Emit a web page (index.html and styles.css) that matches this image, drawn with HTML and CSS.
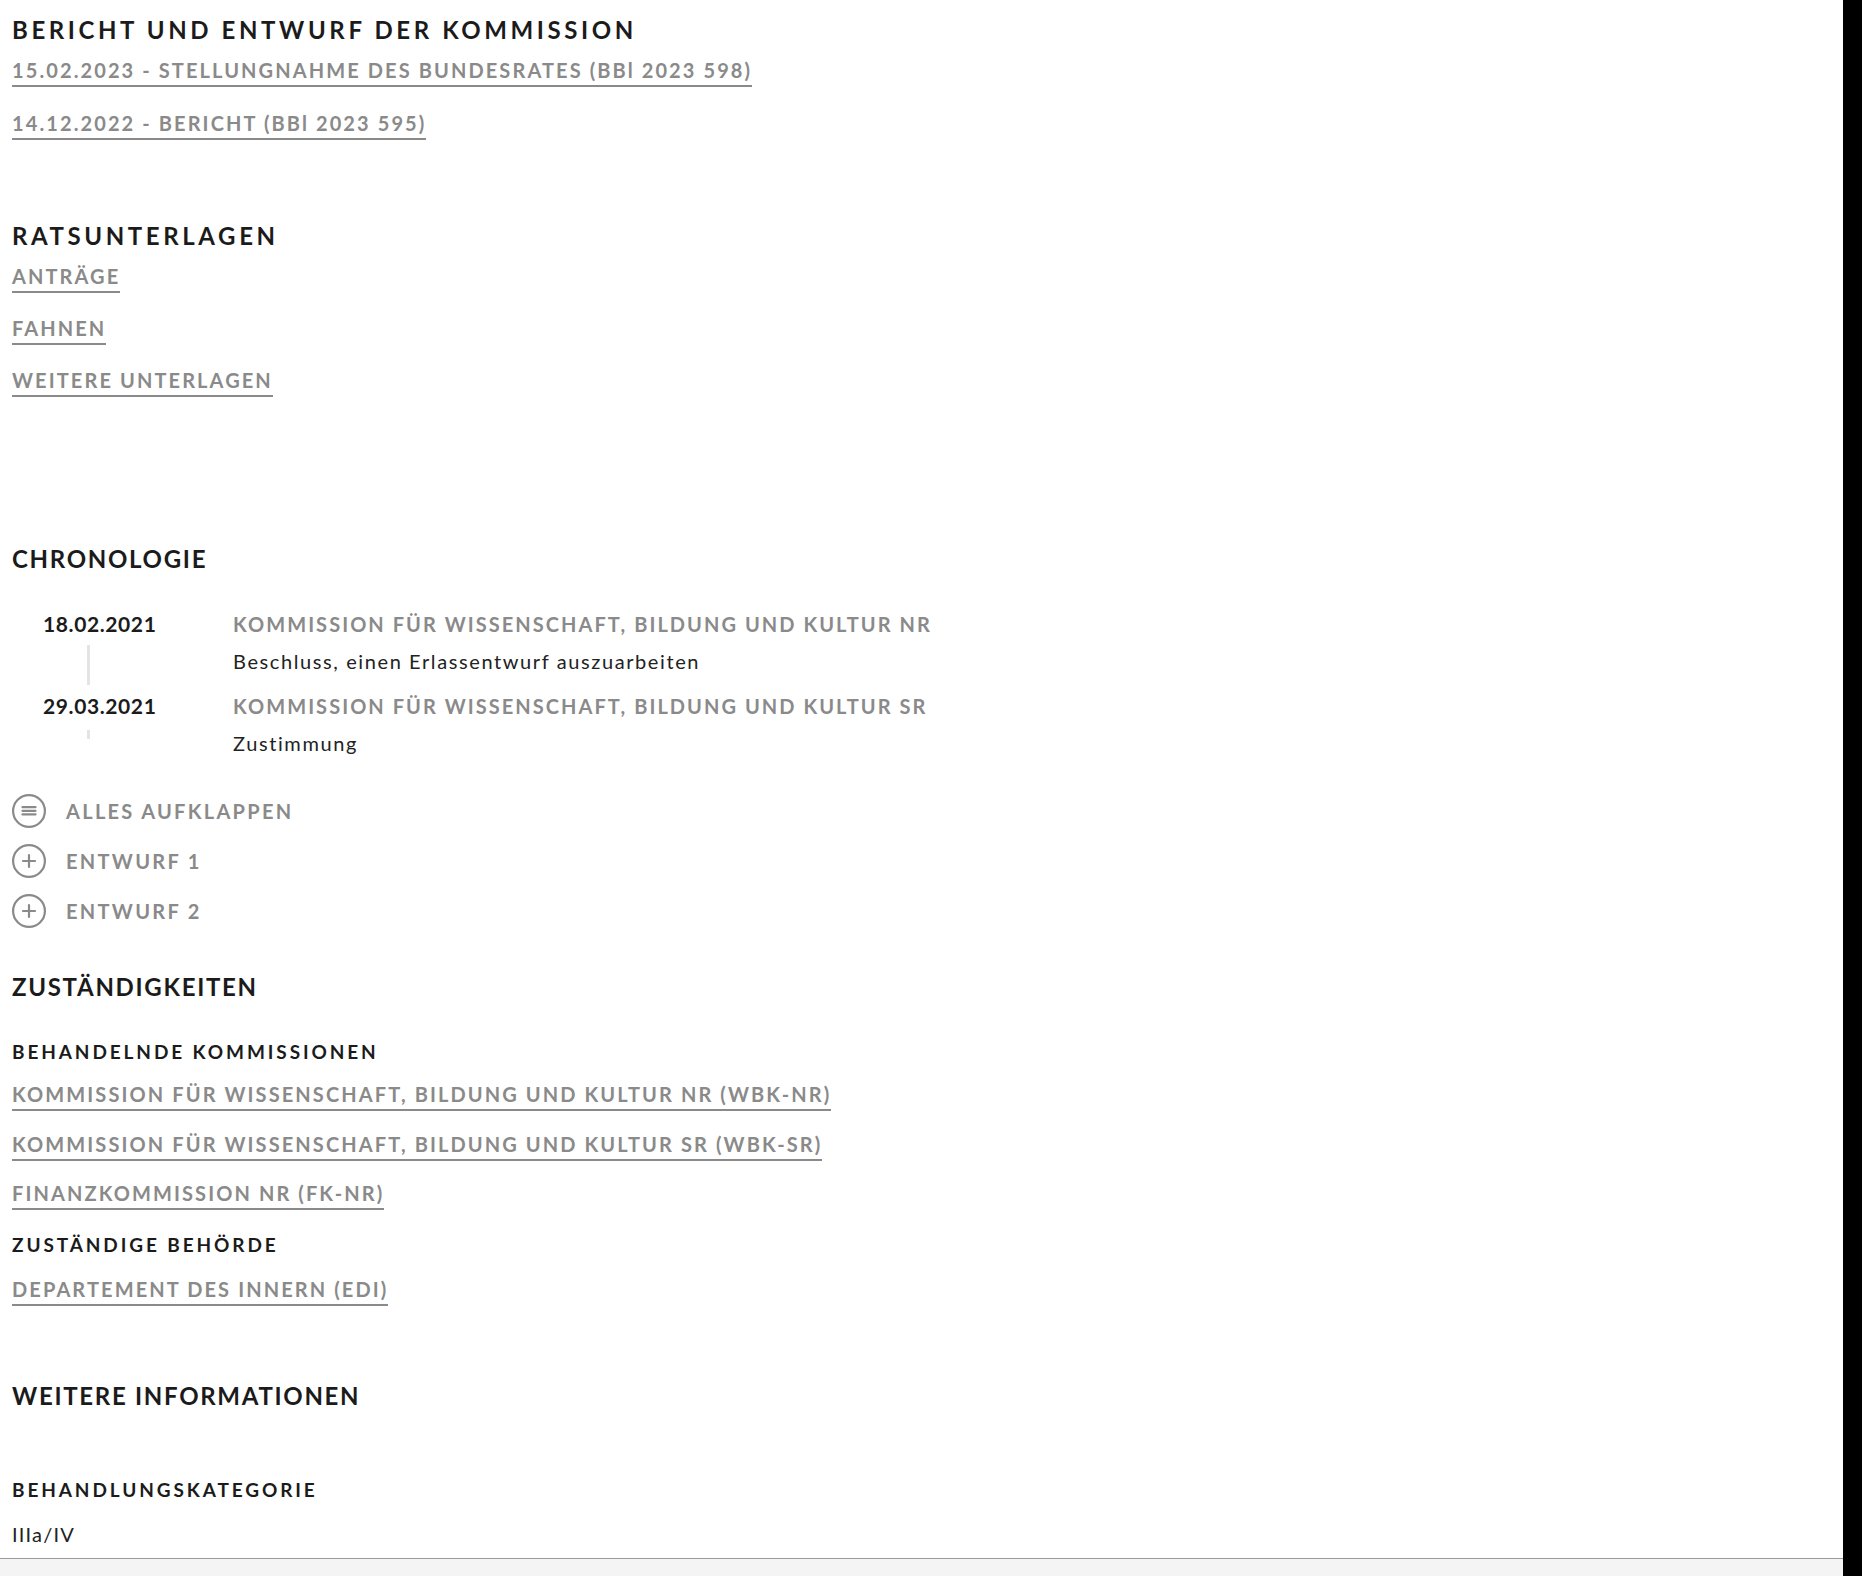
FILE: index.html
```html
<!DOCTYPE html>
<html lang="de">

    <head>
        <meta charset="UTF-8">
        <meta name="viewport" content="width=device-width, initial-scale=1.0">
        <title>Geschäft</title>
        <link rel="stylesheet" href="styles.css">
    </head>

    <body>
        <div class="page">
            <div class="main">
                <div class="content">
                    <h2 class="heading heading-wide">Bericht und Entwurf der Kommission</h2>
                    <ul class="links links-first">
                        <li><a href="#" class="doc-link">15.02.2023 - Stellungnahme des Bundesrates (BB<span class="keep-case">l</span> 2023 598)</a></li>
                        <li><a href="#" class="doc-link">14.12.2022 - Bericht (BB<span class="keep-case">l</span> 2023 595)</a></li>
                    </ul>

                    <h2 class="heading heading-wide heading-rats">Ratsunterlagen</h2>
                    <ul class="links links-rats">
                        <li><a href="#" class="doc-link">Anträge</a></li>
                        <li><a href="#" class="doc-link">Fahnen</a></li>
                        <li><a href="#" class="doc-link">Weitere Unterlagen</a></li>
                    </ul>

                    <h2 class="heading heading-chrono">Chronologie</h2>
                    <div class="timeline">
                        <div class="tl-entry">
                            <div class="tl-date-col">
                                <span class="tl-date">18.02.2021</span>
                                <span class="tl-line tl-line-long"></span>
                            </div>
                            <div class="tl-body">
                                <p class="tl-title">Kommission für Wissenschaft, Bildung und Kultur NR</p>
                                <p class="tl-text">Beschluss, einen Erlassentwurf auszuarbeiten</p>
                            </div>
                        </div>
                        <div class="tl-entry">
                            <div class="tl-date-col">
                                <span class="tl-date">29.03.2021</span>
                                <span class="tl-line tl-line-short"></span>
                            </div>
                            <div class="tl-body">
                                <p class="tl-title">Kommission für Wissenschaft, Bildung und Kultur SR</p>
                                <p class="tl-text">Zustimmung</p>
                            </div>
                        </div>
                    </div>

                    <div class="toggles">
                        <div class="toggle">
                            <svg class="toggle-icon" viewBox="0 0 34 34" width="34" height="34">
                                <circle cx="17" cy="17" r="15.9" fill="none" stroke="#8a8a8a" stroke-width="2.2"/>
                                <path d="M10.5 13.2h13M10.5 16.8h13M10.5 20.4h13" stroke="#8a8a8a" stroke-width="2.2" stroke-linecap="round"/>
                            </svg>
                            <span>Alles aufklappen</span>
                        </div>
                        <div class="toggle">
                            <svg class="toggle-icon" viewBox="0 0 34 34" width="34" height="34">
                                <circle cx="17" cy="17" r="15.9" fill="none" stroke="#8a8a8a" stroke-width="2.2"/>
                                <path d="M11 17h12M17 11v12" stroke="#8a8a8a" stroke-width="2.2" stroke-linecap="round"/>
                            </svg>
                            <span>Entwurf 1</span>
                        </div>
                        <div class="toggle">
                            <svg class="toggle-icon" viewBox="0 0 34 34" width="34" height="34">
                                <circle cx="17" cy="17" r="15.9" fill="none" stroke="#8a8a8a" stroke-width="2.2"/>
                                <path d="M11 17h12M17 11v12" stroke="#8a8a8a" stroke-width="2.2" stroke-linecap="round"/>
                            </svg>
                            <span>Entwurf 2</span>
                        </div>
                    </div>

                    <h2 class="heading heading-zust">Zuständigkeiten</h2>
                    <h3 class="subheading subheading-first">Behandelnde Kommissionen</h3>
                    <ul class="links links-tight">
                        <li><a href="#" class="doc-link">Kommission für Wissenschaft, Bildung und Kultur NR (WBK-NR)</a></li>
                        <li><a href="#" class="doc-link">Kommission für Wissenschaft, Bildung und Kultur SR (WBK-SR)</a></li>
                        <li><a href="#" class="doc-link">Finanzkommission NR (FK-NR)</a></li>
                    </ul>
                    <h3 class="subheading subheading-next">Zuständige Behörde</h3>
                    <ul class="links links-single">
                        <li><a href="#" class="doc-link">Departement des Innern (EDI)</a></li>
                    </ul>

                    <h2 class="heading heading-info">Weitere Informationen</h2>
                    <h3 class="subheading subheading-info">Behandlungskategorie</h3>
                    <p class="value">IIIa/IV</p>
                </div>
                <div class="footer"></div>
            </div>
            <div class="edge"></div>
        </div>
    </body>

</html>
```

FILE: styles.css
```css
* {
    margin: 0;
    padding: 0;
    box-sizing: border-box;
}

html,
body {
    height: 100%;
}

body {
    font-family: 'Lato', 'Liberation Sans', sans-serif;
    background-color: #ffffff;
    color: #1b1b1b;
    overflow: hidden;
}

.page {
    display: flex;
    height: 1576px;
}

.main {
    flex: 1;
    display: flex;
    flex-direction: column;
}

.content {
    flex: 1;
    padding: 14px 0 0 12px;
}

.edge {
    width: 19px;
    background-color: #000000;
}

.footer {
    height: 18px;
    border-top: 1px solid #9a9a9a;
    background-color: #f4f4f4;
}

/* headings */

.heading {
    font-size: 24px;
    line-height: 32px;
    font-weight: 700;
    text-transform: uppercase;
    letter-spacing: 1.7px;
    color: #1b1b1b;
}

.heading-wide {
    letter-spacing: 3.6px;
}

.heading-rats {
    margin-top: 80px;
}

.heading-chrono {
    margin-top: 146px;
}

.heading-zust {
    margin-top: 43px;
}

.heading-info {
    margin-top: 74px;
}

.subheading {
    font-size: 19px;
    line-height: 30px;
    font-weight: 700;
    text-transform: uppercase;
    letter-spacing: 2.9px;
    color: #1b1b1b;
}

.subheading-first {
    margin-top: 34px;
}

.subheading-next {
    margin-top: 20px;
}

.subheading-info {
    margin-top: 63px;
}

/* link lists */

.links {
    list-style: none;
    display: flex;
    flex-direction: column;
    align-items: flex-start;
}

.links-first {
    margin-top: 9px;
    gap: 21px;
}

.links-rats {
    margin-top: 9px;
    gap: 20px;
}

.links-tight {
    margin-top: 12px;
    gap: 17.5px;
}

.links-single {
    margin-top: 14px;
}

.doc-link {
    display: inline-block;
    font-size: 20px;
    line-height: 30px;
    font-weight: 700;
    text-transform: uppercase;
    letter-spacing: 2.1px;
    color: #8a8a8a;
    text-decoration: none;
    border-bottom: 2px solid #8a8a8a;
}

.keep-case {
    text-transform: none;
}

/* timeline */

.timeline {
    margin-top: 34px;
    padding-left: 31px;
    display: flex;
    flex-direction: column;
    gap: 14px;
}

.tl-entry {
    display: grid;
    grid-template-columns: 190px 1fr;
}

.tl-date-col {
    display: flex;
    flex-direction: column;
}

.tl-date {
    font-size: 21px;
    line-height: 30px;
    font-weight: 700;
    letter-spacing: 0.6px;
    color: #1b1b1b;
}

.tl-line {
    width: 3px;
    margin-left: 44px;
    background-color: #e4e4e4;
}

.tl-line-long {
    margin-top: 6px;
    height: 40px;
    margin-bottom: -8px;
}

.tl-line-short {
    margin-top: 9px;
    height: 9px;
}

.tl-title {
    font-size: 20px;
    line-height: 30px;
    font-weight: 700;
    text-transform: uppercase;
    letter-spacing: 2.05px;
    color: #8a8a8a;
}

.tl-text {
    margin-top: 7px;
    font-size: 20px;
    line-height: 30px;
    letter-spacing: 1.6px;
    color: #222222;
}

/* toggles */

.toggles {
    margin-top: 36px;
    display: flex;
    flex-direction: column;
    gap: 16px;
}

.toggle {
    display: flex;
    align-items: center;
    gap: 20px;
    font-size: 20px;
    font-weight: 700;
    text-transform: uppercase;
    letter-spacing: 2.3px;
    color: #8a8a8a;
    cursor: pointer;
}

.toggle-icon {
    display: block;
    flex-shrink: 0;
}

/* values */

.value {
    margin-top: 14px;
    font-size: 20px;
    line-height: 30px;
    letter-spacing: 1.2px;
    color: #222222;
}
```
